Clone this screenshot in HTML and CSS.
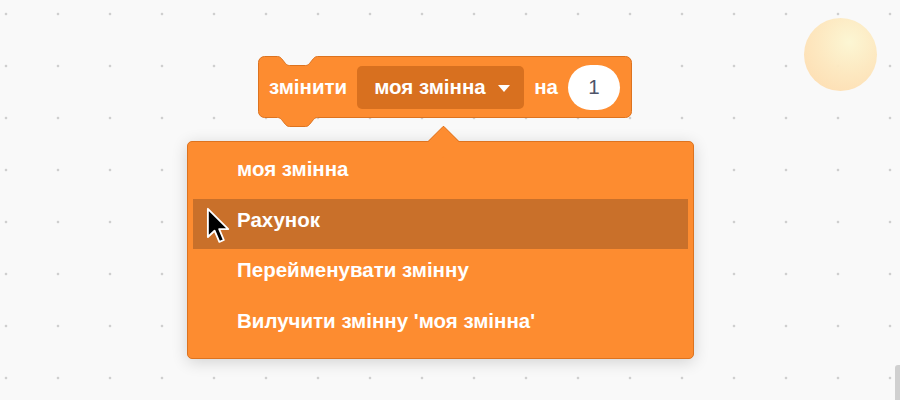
FILE: index.html
```html
<!DOCTYPE html>
<html lang="uk">
<head>
<meta charset="utf-8">
<title>Scratch block menu</title>
<link rel="stylesheet" href="styles.css">
</head>
<body>
<div class="workspace">
  <div class="sprite"></div>

  <div class="block">
    <svg class="block-shape" width="376" height="74" viewBox="-1 -1 376 74">
      <path d="M 0.5 6.5 A 6 6 0 0 1 6.5 0.5 H 19.5 c 2 0 3 1 4 2 l 4 5 c 1 1 2 2 4 2 H 47.5 c 2 0 3 -1 4 -2 l 4 -5 c 1 -1 2 -2 4 -2 H 367.5 A 6 6 0 0 1 373.5 6.5 V 55.5 A 6 6 0 0 1 367.5 61.5 H 59.5 c -2 0 -3 1 -4 2 l -4 5 c -1 1 -2 2 -4 2 H 31.5 c -2 0 -3 -1 -4 -2 l -4 -5 c -1 -1 -2 -2 -4 -2 H 6.5 A 6 6 0 0 1 0.5 55.5 Z" fill="#fd8c30" stroke="#dd731f" stroke-width="1"/>
    </svg>
    <span class="label">змінити</span>
    <div class="dropdown">
      <span>моя змінна</span>
      <span class="caret"></span>
    </div>
    <span class="label">на</span>
    <div class="num">1</div>
  </div>

  <div class="menu">
    <div class="menu-arrow"></div>
    <div class="item">моя змінна</div>
    <div class="item active">Рахунок</div>
    <div class="item">Перейменувати змінну</div>
    <div class="item">Вилучити змінну 'моя змінна'</div>
  </div>

  <svg class="cursor" width="26" height="38" viewBox="0 0 14 20.5">
    <path d="M1 1 L1 16.2 L4.6 12.8 L7.2 18.8 L9.6 17.8 L7.1 11.9 L12 11.9 Z" fill="#000" stroke="#fff" stroke-width="1" stroke-linejoin="round"/>
  </svg>

  <div class="scrollbar"></div>
</div>
</body>
</html>
```

FILE: styles.css
```css
* {
  box-sizing: border-box;
}

html, body {
  margin: 0;
  padding: 0;
}

body {
  font-family: "Liberation Sans", Arial, Helvetica, sans-serif;
  background: #f9f9f9;
}

.workspace {
  position: relative;
  width: 900px;
  height: 400px;
  overflow: hidden;
  background-color: #f9f9f9;
  background-image: radial-gradient(circle, #cfcfcf 1px, transparent 1.7px);
  background-size: 52px 52px;
  background-position: -20px -12px;
}

.sprite {
  position: absolute;
  left: 804px;
  top: 18px;
  width: 73px;
  height: 73px;
  border-radius: 50%;
  background: radial-gradient(circle at 62% 33%, #fcf6d2 0%, #fde8bf 45%, #fed9ab 100%);
  opacity: 0.96;
}

.block {
  position: absolute;
  left: 258px;
  top: 56px;
  width: 374px;
  height: 62px;
  display: flex;
  align-items: center;
  gap: 10px;
  padding-left: 11px;
  isolation: isolate;
  color: #fff;
  font-weight: bold;
  font-size: 20.5px;
}

.block-shape {
  position: absolute;
  left: -1px;
  top: -1px;
  z-index: -1;
}

.label {
  white-space: nowrap;
}

.dropdown {
  height: 43px;
  width: 167px;
  flex-shrink: 0;
  display: flex;
  align-items: center;
  gap: 12px;
  padding-left: 17px;
  background: #d8701f;
  border-radius: 5px;
  white-space: nowrap;
}

.caret {
  width: 0;
  height: 0;
  border-left: 6.5px solid transparent;
  border-right: 6.5px solid transparent;
  border-top: 7px solid #fff;
  margin-top: 2px;
}

.num {
  width: 52px;
  height: 45px;
  flex-shrink: 0;
  border-radius: 23px;
  background: #fff;
  color: #4e546a;
  font-weight: normal;
  display: flex;
  align-items: center;
  justify-content: center;
}

.menu {
  position: absolute;
  left: 187px;
  top: 141px;
  width: 507px;
  height: 218px;
  background: #fd8c30;
  border: 1px solid #dd731f;
  border-radius: 5px;
  box-shadow: 0 3px 16px rgba(0, 0, 0, 0.16);
  padding: 6px 5px 8px 5px;
  display: flex;
  flex-direction: column;
}

.menu-arrow {
  position: absolute;
  left: 244px;
  top: -12px;
  width: 23px;
  height: 23px;
  background: #fd8c30;
  border-top: 1px solid #dd731f;
  border-left: 1px solid #dd731f;
  transform: rotate(45deg);
  border-top-left-radius: 2px;
}

.item {
  position: relative;
  height: 51px;
  display: flex;
  align-items: center;
  padding-left: 44px;
  padding-bottom: 8px;
  color: #fff;
  font-weight: bold;
  font-size: 20.5px;
  white-space: nowrap;
}

.item.active {
  background: #c9702a;
}

.cursor {
  position: absolute;
  left: 206px;
  top: 207px;
}

.scrollbar {
  position: absolute;
  right: 0;
  top: 365px;
  width: 5px;
  height: 35px;
  background: #d0d0d0;
  border-top-left-radius: 3px;
}
```
